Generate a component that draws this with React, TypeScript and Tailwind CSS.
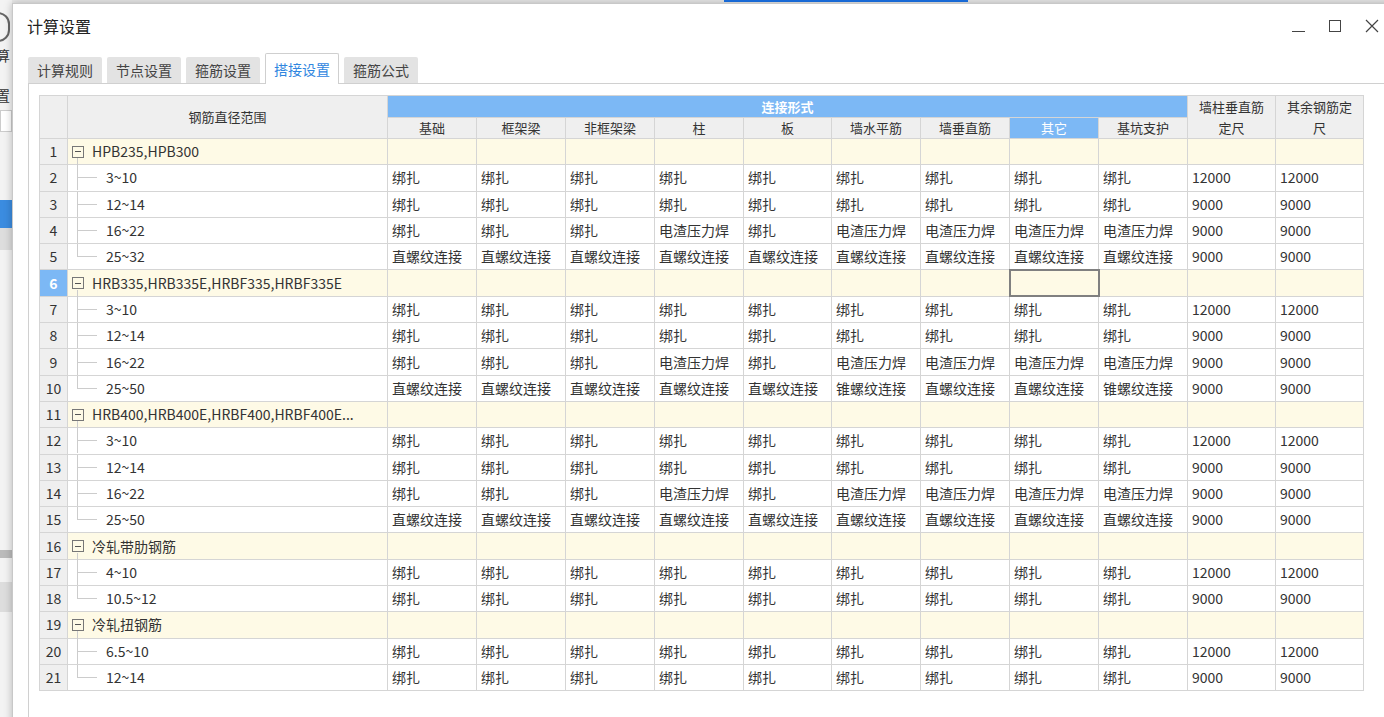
import React from 'react';

type Row = { kind: 'group' | 'item'; label: string; vals?: string[]; last?: boolean };

const B = '绑扎';
const D = '电渣压力焊';
const Z = '直螺纹连接';
const G = '锥螺纹连接';

const bind = (a: string, b: string) => [B, B, B, B, B, B, B, B, B, a, b];
const weld = (a: string, b: string) => [B, B, B, D, B, D, D, D, D, a, b];

const rows: Row[] = [
  { kind: 'group', label: 'HPB235,HPB300' },
  { kind: 'item', label: '3~10', vals: bind('12000', '12000') },
  { kind: 'item', label: '12~14', vals: bind('9000', '9000') },
  { kind: 'item', label: '16~22', vals: weld('9000', '9000') },
  { kind: 'item', label: '25~32', vals: [Z, Z, Z, Z, Z, Z, Z, Z, Z, '9000', '9000'], last: true },
  { kind: 'group', label: 'HRB335,HRB335E,HRBF335,HRBF335E' },
  { kind: 'item', label: '3~10', vals: bind('12000', '12000') },
  { kind: 'item', label: '12~14', vals: bind('9000', '9000') },
  { kind: 'item', label: '16~22', vals: weld('9000', '9000') },
  { kind: 'item', label: '25~50', vals: [Z, Z, Z, Z, Z, G, Z, Z, G, '9000', '9000'], last: true },
  { kind: 'group', label: 'HRB400,HRB400E,HRBF400,HRBF400E...' },
  { kind: 'item', label: '3~10', vals: bind('12000', '12000') },
  { kind: 'item', label: '12~14', vals: bind('9000', '9000') },
  { kind: 'item', label: '16~22', vals: weld('9000', '9000') },
  { kind: 'item', label: '25~50', vals: [Z, Z, Z, Z, Z, Z, Z, Z, Z, '9000', '9000'], last: true },
  { kind: 'group', label: '冷轧带肋钢筋' },
  { kind: 'item', label: '4~10', vals: bind('12000', '12000') },
  { kind: 'item', label: '10.5~12', vals: bind('9000', '9000'), last: true },
  { kind: 'group', label: '冷轧扭钢筋' },
  { kind: 'item', label: '6.5~10', vals: bind('12000', '12000') },
  { kind: 'item', label: '12~14', vals: bind('9000', '9000'), last: true },
];

const subHeads = ['基础', '框架梁', '非框架梁', '柱', '板', '墙水平筋', '墙垂直筋', '其它', '基坑支护'];
const widths = [28, 320, 89, 89, 89, 89, 88, 89, 89, 89, 89, 88, 88];

export default function App() {
  return (
    <div
      className="relative w-[1384px] h-[717px] overflow-hidden bg-[#e9e9e9] text-[13px] text-[#333]"
      style={{ fontFamily: '"Noto Sans CJK SC", "Noto Sans", sans-serif' }}
    >
      {/* background app fragments */}
      <div className="absolute left-0 top-0 w-[12px] h-full bg-[#f3f3f3] overflow-hidden text-[#333]">
        <div className="mt-[12px] ml-[-14px] w-[24px] h-[30px] rounded-full border-2 border-[#666]" />
        <div className="mt-[4px] ml-[-4px] text-[14px] leading-[18px]">算</div>
        <div className="mt-[22px] ml-[-4px] text-[14px] leading-[18px]">置</div>
        <div className="mt-[6px] h-[22px] bg-white border border-[#ccc] text-[12px]" />
        <div className="mt-[40px] h-[18px]" />
        <div className="mt-[10px] h-[28px] bg-[#3b8ce0]" />
        <div className="h-[22px] bg-[#ddd]" />
        <div className="mt-[300px] h-[8px] bg-[#bbb]" />
        <div className="mt-[24px] h-[30px] bg-[#ddd]" />
      </div>
      <div className="absolute left-[724px] top-0 w-[244px] h-[2px] bg-[#1a73e8]" />

      {/* dialog */}
      <div className="absolute left-[12px] top-[3px] right-[-20px] bottom-[-20px] bg-white border border-[#c8c8c8] shadow-[0_0_8px_rgba(0,0,0,0.25)]">
        <div className="flex items-center h-[44px] pl-[14px]">
          <span className="text-[16px] text-[#222]">计算设置</span>
          <div className="ml-auto flex items-center gap-[24px] pr-[24px] text-[#444]">
            <div className="w-[13px] h-px bg-[#444] mt-[10px]" />
            <div className="w-[12px] h-[12px] border border-[#444]" />
            <svg width="14" height="14" viewBox="0 0 14 14" stroke="#444" strokeWidth="1.2">
              <path d="M1 1L13 13M13 1L1 13" />
            </svg>
          </div>
        </div>

        {/* tabs */}
        <div className="flex items-end gap-[5px] pl-[15px] h-[35px]">
          {['计算规则', '节点设置', '箍筋设置', '搭接设置', '箍筋公式'].map((t) =>
            t === '搭接设置' ? (
              <div key={t} className="h-[31px] w-[74px] flex items-center justify-center bg-white border border-b-0 border-[#cfcfcf] rounded-t-[2px] text-[#2f86e0] text-[14px] relative top-px">
                {t}
              </div>
            ) : (
              <div key={t} className="h-[26px] w-[74px] flex items-center justify-center bg-[#e3e3e3] text-[#444] text-[14px] rounded-t-[2px]">
                {t}
              </div>
            )
          )}
        </div>

        <div className="ml-[15px] border border-[#d0d0d0] h-[640px] pt-[11px] pl-[10px]">
          <table className="border-collapse table-fixed" style={{ width: widths.reduce((a, b) => a + b, 0) }}>
            <colgroup>
              {widths.map((w, i) => (
                <col key={i} style={{ width: w }} />
              ))}
            </colgroup>
            <thead>
              <tr className="h-[21px]">
                <th rowSpan={2} className="bg-[#efefef] border border-[#d5d5d5]" />
                <th rowSpan={2} className="bg-[#efefef] border border-[#d5d5d5] font-normal text-center">钢筋直径范围</th>
                <th colSpan={9} className="bg-[#7cb8f5] border border-[#d5d5d5] text-white font-bold text-[13px] leading-[19px]">连接形式</th>
                <th rowSpan={2} className="bg-[#efefef] border border-[#d5d5d5] font-normal leading-[21px]">墙柱垂直筋<br />定尺</th>
                <th rowSpan={2} className="bg-[#efefef] border border-[#d5d5d5] font-normal leading-[21px]">其余钢筋定<br />尺</th>
              </tr>
              <tr className="h-[21px]">
                {subHeads.map((h) => (
                  <th
                    key={h}
                    className={`border border-[#d5d5d5] font-normal leading-[19px] ${h === '其它' ? 'bg-[#7cb8f5] text-white font-bold' : 'bg-[#efefef]'}`}
                  >
                    {h}
                  </th>
                ))}
              </tr>
            </thead>
            <tbody>
              {rows.map((r, i) => {
                const n = i + 1;
                const sel = n === 6;
                return (
                  <tr key={n} className="h-[26.3px]">
                    <td className={`border border-[#d5d5d5] text-center text-[14px] ${sel ? 'bg-[#7cb8f5] text-white font-bold' : 'bg-[#efefef]'}`}>{n}</td>
                    {r.kind === 'group' ? (
                      <>
                        <td className="border border-[#d5d5d5] bg-[#fefae6] p-0">
                          <div className="relative flex items-center h-[25px] pl-[4px] whitespace-nowrap text-[14px]">
                            <span className="w-[12px] h-[12px] border border-[#777] flex items-center justify-center mr-[8px]">
                              <span className="w-[6px] h-px bg-[#555]" />
                            </span>
                            {r.label}
                            <span className="absolute left-[9px] top-[19px] h-[8px] w-px bg-[#ccc]" />
                          </div>
                        </td>
                        {Array.from({ length: 11 }).map((_, j) => (
                          <td key={j} className={`bg-[#fefae6] ${sel && j === 7 ? 'border-2 border-[#808080]' : 'border border-[#d5d5d5]'}`} />
                        ))}
                      </>
                    ) : (
                      <>
                        <td className="border border-[#d5d5d5] p-0">
                          <div className="relative h-[25px] flex items-center pl-[38px] text-[14px]">
                            <span className={`absolute left-[9px] top-0 w-px bg-[#ccc] ${r.last ? 'h-[13px]' : 'h-full'}`} />
                            <span className="absolute left-[9px] top-[12px] w-[20px] h-px bg-[#ccc]" />
                            {r.label}
                          </div>
                        </td>
                        {r.vals!.map((v, j) => (
                          <td key={j} className="border border-[#d5d5d5] px-[4px] text-[14px] whitespace-nowrap overflow-hidden">
                            {v}
                          </td>
                        ))}
                      </>
                    )}
                  </tr>
                );
              })}
            </tbody>
          </table>
        </div>
      </div>
    </div>
  );
}
